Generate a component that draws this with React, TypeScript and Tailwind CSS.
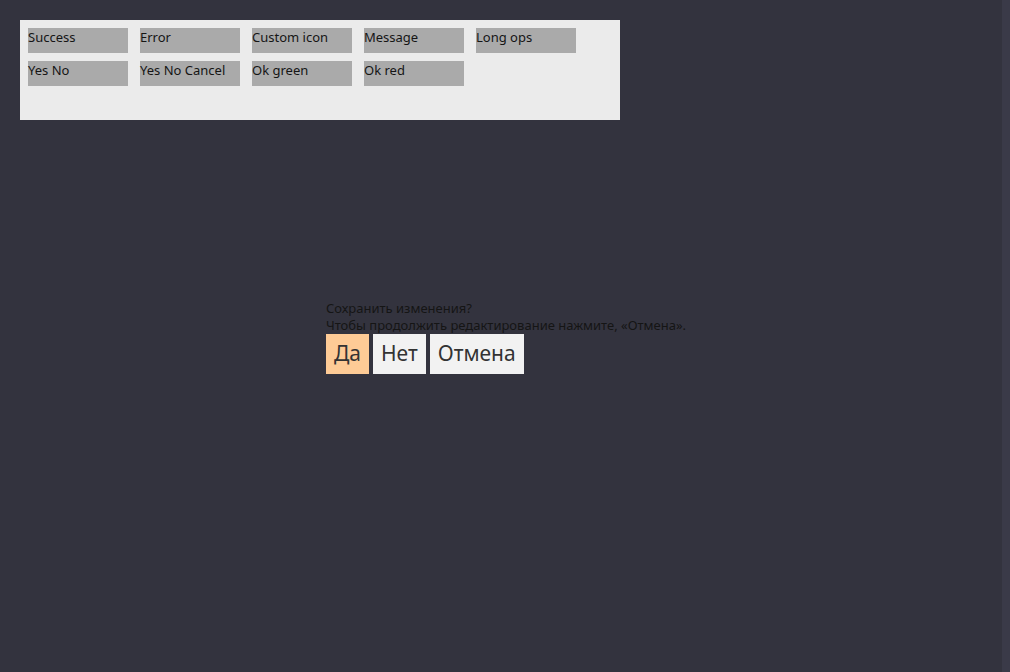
import React from "react";

const row1 = ["Success", "Error", "Custom icon", "Message", "Long ops"];
const row2 = ["Yes No", "Yes No Cancel", "Ok green", "Ok red"];

function DemoButton({ label }: { label: string }) {
  return (
    <button className="w-[100px] h-[25px] bg-[#aaaaaa] text-left text-[13px] leading-[17px] text-[#151515] flex items-start p-0 pt-px">
      {label}
    </button>
  );
}

export default function App() {
  return (
    <div
      className="w-[1010px] h-[672px] bg-[#33333e] flex overflow-hidden"
      style={{ fontFamily: '"Noto Sans", "Open Sans", sans-serif' }}
    >
      <div className="flex-1 relative">
        <div className="m-5 w-[600px] h-[100px] bg-[#ebebeb] p-2 flex flex-col gap-2">
          <div className="flex gap-3">
            {row1.map((l) => (
              <DemoButton key={l} label={l} />
            ))}
          </div>
          <div className="flex gap-3">
            {row2.map((l) => (
              <DemoButton key={l} label={l} />
            ))}
          </div>
        </div>
        <div className="absolute inset-0 flex items-center justify-center pl-[10px] pt-[1px]">
          <div className="flex flex-col text-[13px] leading-[17px] text-[#151515]">
            <div>Сохранить изменения?</div>
            <div>Чтобы продолжить редактирование нажмите, «Отмена».</div>
            <div className="flex gap-1">
              <button className="h-10 px-2 bg-[#fecb96] text-[21px] text-[#333333]">Да</button>
              <button className="h-10 px-2 bg-[#f2f2f2] text-[21px] text-[#333333]">Нет</button>
              <button className="h-10 px-2 bg-[#f2f2f2] text-[21px] text-[#333333]">Отмена</button>
            </div>
          </div>
        </div>
      </div>
      <div className="w-2 h-full bg-[#3a3a48]" />
    </div>
  );
}
